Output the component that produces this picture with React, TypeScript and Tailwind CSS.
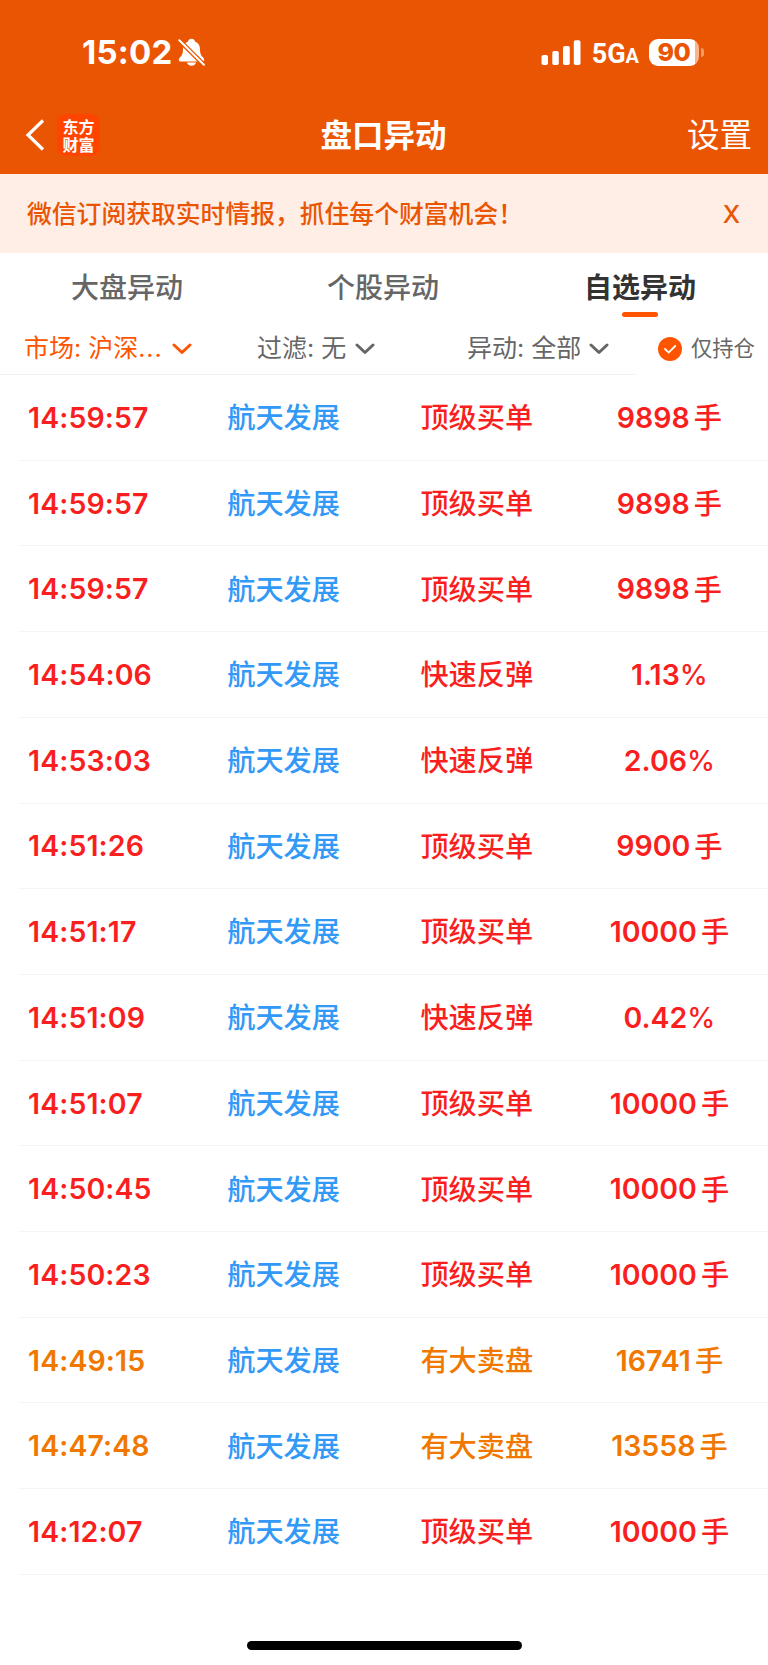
import { clsx } from 'clsx';

type Tone = 'up' | 'warn';

interface Move {
  time: string;
  type: string;
  value: string;
  unit?: string;
  tone?: Tone;
}

const MOVES: Move[] = [
  { time: '14:59:57', type: '顶级买单', value: '9898', unit: '手' },
  { time: '14:59:57', type: '顶级买单', value: '9898', unit: '手' },
  { time: '14:59:57', type: '顶级买单', value: '9898', unit: '手' },
  { time: '14:54:06', type: '快速反弹', value: '1.13', unit: '%' },
  { time: '14:53:03', type: '快速反弹', value: '2.06', unit: '%' },
  { time: '14:51:26', type: '顶级买单', value: '9900', unit: '手' },
  { time: '14:51:17', type: '顶级买单', value: '10000', unit: '手' },
  { time: '14:51:09', type: '快速反弹', value: '0.42', unit: '%' },
  { time: '14:51:07', type: '顶级买单', value: '10000', unit: '手' },
  { time: '14:50:45', type: '顶级买单', value: '10000', unit: '手' },
  { time: '14:50:23', type: '顶级买单', value: '10000', unit: '手' },
  { time: '14:49:15', type: '有大卖盘', value: '16741', unit: '手', tone: 'warn' },
  { time: '14:47:48', type: '有大卖盘', value: '13558', unit: '手', tone: 'warn' },
  { time: '14:12:07', type: '顶级买单', value: '10000', unit: '手' },
];

function BellOffIcon() {
  return (
    <svg className="ml-[6px] h-7 w-[27px]" viewBox="0 0 27 28">
      <path
        d="M13.5.8c-1.9 0-3.1 1.1-3.4 2.6C6.6 4.8 5 7.6 5 11c0 4.5-1 6.2-2.7 8.1C1.2 20.3.8 21 .8 22c0 .9.7 1.5 1.9 1.5h21.6c1.2 0 1.9-.6 1.9-1.5 0-1-.4-1.7-1.5-2.9C23 17.2 22 15.5 22 11c0-3.4-1.6-6.2-5.1-7.6C16.6 1.9 15.4.8 13.5.8z"
        fill="#fff"
      />
      <path d="M9 24.6h9c-.3 2-2.2 3.2-4.5 3.2S9.3 26.6 9 24.6z" fill="#fff" />
      <path d="M0 1l27 27" stroke="#ea5504" strokeWidth="4.5" />
      <path d="M1.3 2.3l24.6 24.4" stroke="#fff" strokeWidth="2" strokeLinecap="round" />
    </svg>
  );
}

function SignalIcon() {
  return (
    <svg className="h-[25px] w-10" viewBox="0 0 40 25" fill="#fff">
      <rect x="0.5" y="15" width="6.5" height="10" rx="1.8" />
      <rect x="11.3" y="11" width="6.5" height="14" rx="1.8" />
      <rect x="22" y="6" width="6.8" height="19" rx="1.8" />
      <rect x="32.8" y="0.3" width="6.7" height="24.7" rx="1.8" />
    </svg>
  );
}

function Battery() {
  return (
    <div className="flex items-center">
      <div className="flex h-[27px] w-[50px] items-center justify-center rounded-[9px] bg-[linear-gradient(to_right,#fff_46px,#f7b48e_46px)] pt-px text-[25px] font-extrabold leading-none tracking-[-0.5px] text-[#ea5504]">
        90
      </div>
      <div className="ml-[2px] h-[9px] w-[3px] rounded-r-full bg-[#f39b69]" />
    </div>
  );
}

function StatusBar() {
  return (
    <div className="flex h-[104px] items-center pl-[82px] pr-[64px] text-white">
      <span className="pt-px text-[33px] font-bold leading-none tracking-[0.2px]">15:02</span>
      <BellOffIcon />
      <div className="ml-auto flex items-center">
        <SignalIcon />
        <span className="ml-[11px] pt-[4px] font-[Roboto,sans-serif] text-[27px] font-bold leading-none">
          5G<span className="text-[20px]">A</span>
        </span>
        <div className="ml-[10px]">
          <Battery />
        </div>
      </div>
    </div>
  );
}

function NavBar() {
  return (
    <div className="grid h-[70px] grid-cols-3 items-center px-[16px] pb-[7px] text-white">
      <div className="flex items-center pb-px pl-[9px]">
        <svg className="h-8 w-5" viewBox="0 0 20 32" fill="none">
          <path d="M18 1.500L3 16l15 14.500" stroke="#fff" strokeWidth="3.200" />
        </svg>
        <div className="ml-[12px] flex h-[42px] w-[43px] items-center justify-center rounded-[9px] bg-[#ff4400]">
          <span className="w-[32px] break-all font-['Noto_Sans_CJK_SC',sans-serif] text-[16px] font-bold leading-[18px]">
            东方财富
          </span>
        </div>
      </div>
      <h1 className="pr-px text-center text-[31.500px] font-bold">盘口异动</h1>
      <button className="pt-px text-right text-[32.500px] leading-[46px]">设置</button>
    </div>
  );
}

function Chevron() {
  return (
    <svg className="h-3 w-5" viewBox="0 0 20 12" fill="none">
      <path d="M2 2l8 7.500L18 2" stroke="currentColor" strokeWidth="3" strokeLinecap="round" strokeLinejoin="round" />
    </svg>
  );
}

function Tabs() {
  return (
    <div className="grid h-[69px] grid-cols-3 text-[28px] leading-[71px] text-[#666]">
      <div className="pr-[2px] text-center font-medium">大盘异动</div>
      <div className="pr-[2px] text-center font-medium">个股异动</div>
      <div className="relative text-center font-bold text-[#333]">
        自选异动
        <span className="absolute left-1/2 top-[59px] h-[5px] w-9 -translate-x-1/2 rounded-full bg-[#ff5500]" />
      </div>
    </div>
  );
}

function Filters() {
  return (
    <div className="flex h-[53px] items-center text-[25px] text-[#666]">
      <div className="flex h-full w-[636px] items-center border-b border-[#f2f2f2] pl-[24px] pt-px">
        <button className="flex w-[233px] items-center gap-[9px] text-[#ff5500]">
          <span>
            市场: 沪深<span className="tracking-[0.9px]">...</span>
          </span>
          <Chevron />
        </button>
        <button className="flex w-[210px] items-center gap-[9px]">
          过滤: 无
          <Chevron />
        </button>
        <button className="flex items-center gap-[8px] whitespace-nowrap">
          异动: 全部
          <Chevron />
        </button>
      </div>
      <div className="ml-[22px] flex items-center gap-[9px] whitespace-nowrap text-[21.300px]">
        <svg className="h-6 w-6" viewBox="0 0 24 24" fill="none">
          <circle cx="12" cy="12" r="12" fill="#ff5500" />
          <path d="M7 12l3.700 3.600L17.200 9" stroke="#fff" strokeWidth="1.800" strokeLinecap="round" />
        </svg>
        仅持仓
      </div>
    </div>
  );
}

function MoveRow({ move }: { move: Move }) {
  return (
    <div
      className={clsx(
        'ml-[18px] flex h-[85.710px] items-center border-b border-[#f5f5f5] pl-[10px] pt-[2px] text-[28.200px] font-medium',
        move.tone === 'warn' ? 'text-[#f07800]' : 'text-[#f91f1f]',
      )}
    >
      <span className="w-[200px] text-[28.500px] font-semibold tracking-[0.1px]">{move.time}</span>
      <span className="w-[194px] text-[#3399f7]">航天发展</span>
      <span className="w-[151px]">{move.type}</span>
      <span className={clsx('flex w-[198px] items-center justify-center', move.unit === '手' && 'gap-[4px]')}>
        <span className="text-[28.500px] font-semibold">{move.value}</span>
        <span>{move.unit}</span>
      </span>
    </div>
  );
}

export default function App() {
  return (
    <div className="flex h-[1665px] w-[768px] flex-col overflow-hidden bg-white font-[Inter,'Noto_Sans_CJK_SC',sans-serif]">
      <header className="bg-[#ea5504]">
        <StatusBar />
        <NavBar />
      </header>
      <div className="flex h-[79px] items-center justify-between bg-[#feeee6] pl-[27px] pr-[28px] pt-[3px] text-[24.800px] font-medium text-[#ea5504]">
        <span>微信订阅获取实时情报，抓住每个财富机会！</span>
        <button>X</button>
      </div>
      <Tabs />
      <Filters />
      <main>
        {MOVES.map((move, i) => (
          <MoveRow key={i} move={move} />
        ))}
      </main>
      <div className="mx-auto mb-[15px] mt-auto h-[9px] w-[275px] rounded-full bg-black" />
    </div>
  );
}
